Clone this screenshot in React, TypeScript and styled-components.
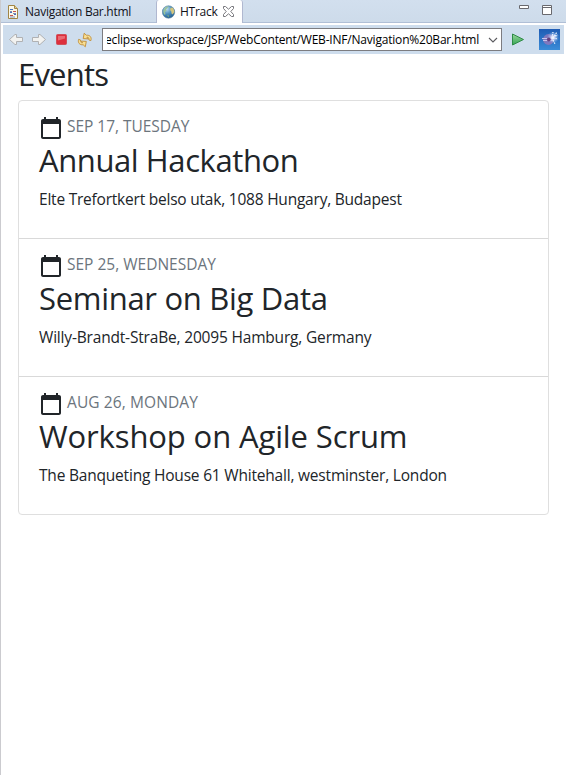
import React from "react";
import styled, { createGlobalStyle } from "styled-components";

const Global = createGlobalStyle`
  * { box-sizing: border-box; }
  body { margin: 0; background: #fff; color: #212529; font-family: "Open Sans", sans-serif; }
  svg { display: block; flex: none; }
`;

const Window = styled.div`
  width: 566px;
  height: 775px;
  border-left: 1px solid #cbcbcf;
  background: #fff;
  overflow: hidden;
`;

const TabBar = styled.header`
  display: flex;
  height: 23px;
  background: linear-gradient(#d2dfee, #cddbea);
  box-shadow: inset 0 -1px #b0bfd6;
`;

const Tab = styled.div<{ $active?: boolean }>`
  display: flex;
  align-items: center;
  width: ${(p) => (p.$active ? "87px" : "155px")};
  height: 23px;
  padding-left: 5px;
  color: #101018;
  background: ${(p) => (p.$active ? "#fff" : "transparent")};
  border: solid #b0b8d0;
  border-width: ${(p) => (p.$active ? "0 1px" : "0")};
  border-radius: 3px 3px 0 0;
`;

const TabLabel = styled.span<{ $gap: number; $width: number }>`
  width: ${(p) => p.$width}px;
  margin-left: ${(p) => p.$gap}px;
  font-size: 12px;
  line-height: 22px;
  letter-spacing: -0.27px;
  white-space: nowrap;
`;

const WindowButtons = styled.div`
  display: flex;
  gap: 13px;
  margin: 5px 14px 0 auto;
`;

const Toolbar = styled.nav`
  display: flex;
  align-items: center;
  height: 29px;
  margin: 2px 2px 0;
  padding: 0 4px 0 5px;
  background: #cedded;
`;

const ToolIcons = styled.div`
  display: flex;
  align-items: center;
  gap: 7px;
  width: 94px;
`;

const Address = styled.div`
  display: flex;
  align-items: center;
  width: 400px;
  height: 23px;
  padding: 0 4px;
  background: #fff;
  border: 1px solid #7c7c80;
`;

const Url = styled.div`
  display: flex;
  flex: none;
  justify-content: flex-end;
  width: 372px;
  overflow: hidden;
  color: #000;
  font-size: 12px;
  line-height: 20px;
  letter-spacing: -0.2px;
  white-space: nowrap;
`;

const DropArrow = styled.div`
  margin-left: 9px;
`;

const Launch = styled.div`
  display: flex;
  flex: 1;
  align-items: center;
  justify-content: space-between;
  padding-left: 10px;
`;

const Page = styled.main`
  padding: 0 17px;
`;

const Heading = styled.h2<{ $spacing: number }>`
  margin: 0;
  font-size: 31px;
  font-weight: 400;
  line-height: 40px;
  letter-spacing: ${(p) => p.$spacing}px;
  white-space: nowrap;
`;

const EventList = styled.ul`
  width: 531px;
  margin: 6px 0 0;
  padding: 0;
  list-style: none;
  border: 1px solid #dfdfdf;
  border-radius: 4px;
`;

const EventItem = styled.li`
  height: 138px;
  padding: 13px 20px 0;
  & + & { border-top: 1px solid #d9d9d9; }
  &:first-child { height: 137px; }
`;

const DateRow = styled.div`
  display: flex;
  align-items: flex-end;
  height: 26px;
`;

const DateText = styled.span<{ $spacing: number }>`
  align-self: flex-start;
  margin-left: 4px;
  color: #6c757d;
  font-size: 15.5px;
  line-height: 25px;
  letter-spacing: ${(p) => p.$spacing}px;
`;

const Venue = styled.p<{ $spacing: number }>`
  margin: 7px 0 0;
  font-size: 15.5px;
  line-height: 25px;
  letter-spacing: ${(p) => p.$spacing}px;
  white-space: nowrap;
`;

const FileIcon = () => (
  <svg width="14" height="16" viewBox="0 0 14 16">
    <path d="M2.5 1.5h6l3 3v10h-9z" fill="#fbf8e8" stroke="#a18546" />
    <path d="M8.5 1.5v3h3" fill="#e4cf94" stroke="#a18546" />
    <path d="M4 5.5h3M4 8.5h2M8 10.5h2" stroke="#4b6fbe" />
    <path d="M7 7.5h3M4 11.5h3" stroke="#c7524b" />
    <path d="M4 7.5h2M7 9.5h3M4 13h5" stroke="#7b8eb4" />
  </svg>
);

const GlobeIcon = () => (
  <svg width="14" height="14" viewBox="0 0 14 14">
    <defs>
      <radialGradient id="sea" cx=".35" cy=".25" r=".8">
        <stop offset="0" stopColor="#c3dff0" />
        <stop offset=".5" stopColor="#4e91bd" />
        <stop offset="1" stopColor="#235b8d" />
      </radialGradient>
    </defs>
    <circle cx="6.5" cy="7" r="6.2" fill="url(#sea)" stroke="#56839f" strokeWidth=".6" />
    <path d="M1.7 5C3 2.5 4.5 1.4 6.5 1.6L5.5 3 4 4.5 4.5 6 2.8 7 3.5 9 2.8 10C1.7 9 1 7 1.7 5z" fill="#9cc49a" />
    <path d="M8.5 3l1.8-.5c1.3 1 2.1 2.7 2 4.5l-1.6 2.6-1.2-1-.2-2L8.1 5z" fill="#d3c57e" />
    <path d="M5 10l2 .5-.5 2z" fill="#7fae76" />
  </svg>
);

const CloseIcon = () => (
  <svg width="11" height="11" viewBox="0 0 11 11">
    <path
      d="M.5.5h2l3 2.7 3-2.7h2v2L7.8 5.5l2.7 3v2h-2l-3-2.7-3 2.7h-2v-2l2.7-3-2.7-3z"
      fill="#fff"
      stroke="#77777c"
    />
  </svg>
);

const MinimizeIcon = () => (
  <svg width="10" height="4" viewBox="0 0 10 4">
    <path d="M.5.5h9v3h-9z" fill="#fff" stroke="#69696e" />
  </svg>
);

const MaximizeIcon = () => (
  <svg width="10" height="10" viewBox="0 0 10 10">
    <path d="M.5.5h9v9h-9z" fill="#fff" stroke="#69696e" />
    <path d="M1 2.5h8" stroke="#69696e" />
  </svg>
);

const ArrowIcon = ({ forward }: { forward?: boolean }) => (
  <svg width="16" height="13" viewBox="0 0 16 13">
    <path
      d={
        forward
          ? "M1.5 4.5h6v-3h1.5l5.5 5-5.5 5H7.5v-3h-6z"
          : "M14.5 4.5h-6v-3H7l-5.5 5 5.5 5h1.5v-3h6z"
      }
      fill="#f2f2f0"
      stroke="#b0b1b3"
      strokeLinejoin="round"
    />
  </svg>
);

const StopIcon = () => (
  <svg width="16" height="13" viewBox="0 0 16 13">
    <rect x="2.5" y="1.5" width="10" height="10" rx="1" fill="#dd2f3d" stroke="#d0505a" />
    <path d="M4 3h7v2.5l-7 2z" fill="#ea6a72" />
  </svg>
);

const RefreshIcon = () => (
  <svg width="16" height="16" viewBox="0 0 16 16">
    <g fill="#f9df93" stroke="#c08c35" strokeWidth=".9" strokeLinejoin="round">
      <path d="M7.2 1.2L6.2 6.6l5 .3-1.3-1.7c1.4-.2 2.2.6 2 2.8l2 .6c.9-3.4-.9-5.7-4.6-5.4z" />
      <path d="M8.3 14.8l1-5.4-5-.3 1.3 1.7c-1.4.2-2.2-.6-2-2.8l-2-.6c-.9 3.4.9 5.7 4.6 5.4z" />
    </g>
  </svg>
);

const ChevronIcon = () => (
  <svg width="10" height="6" viewBox="0 0 10 6">
    <path d="M1 1l4 4 4-4" fill="none" stroke="#5c5c60" strokeWidth="1.1" />
  </svg>
);

const PlayIcon = () => (
  <svg width="13" height="13" viewBox="0 0 13 13">
    <defs>
      <linearGradient id="go" x2="0" y2="1">
        <stop stopColor="#9bd59d" />
        <stop offset="1" stopColor="#32a552" />
      </linearGradient>
    </defs>
    <path d="M.5 1v11l11-5.5z" fill="url(#go)" stroke="#2f8b47" strokeLinejoin="round" />
  </svg>
);

const BrowserIcon = () => (
  <svg width="21" height="21" viewBox="0 0 21 21">
    <defs>
      <linearGradient id="sky" x2="0" y2="1">
        <stop stopColor="#1f5cb4" />
        <stop offset="1" stopColor="#3a8cd8" />
      </linearGradient>
      <radialGradient id="glow">
        <stop stopColor="#fff" />
        <stop offset=".35" stopColor="#d5daf8" stopOpacity=".8" />
        <stop offset="1" stopColor="#86b5ee" stopOpacity="0" />
      </radialGradient>
    </defs>
    <path d="M0 0h21v21H0z" fill="url(#sky)" />
    <circle cx="9.5" cy="10.5" r="5.4" fill="#8878bd" opacity=".9" />
    <path d="M3 9.5h12M4 11.5h11" stroke="#c9c2ea" strokeWidth="1" />
    <circle cx="14" cy="8.5" r="6" fill="url(#glow)" />
    <path d="M14 9l4-6M14 9l5 1M13 9l3 6M13 9l1-6M14 8l5-2" stroke="#eef4ff" strokeWidth="1.2" strokeDasharray="1.5 1" />
    <circle cx="9.8" cy="10.5" r="1.9" fill="#64407f" />
  </svg>
);

const CalendarIcon = () => (
  <svg width="24" height="24" viewBox="0 0 24 24" fill="#212529">
    <path d="M20 3h-1V1h-2v2H7V1H5v2H4c-1.1 0-2 .9-2 2v16c0 1.1.9 2 2 2h16c1.1 0 2-.9 2-2V5c0-1.1-.9-2-2-2zm0 18H4V8h16v13z" />
  </svg>
);

const events = [
  {
    date: "SEP 17, TUESDAY", dateSpacing: -0.03,
    title: "Annual Hackathon", titleSpacing: -0.41,
    venue: "Elte Trefortkert belso utak, 1088 Hungary, Budapest", venueSpacing: -0.22,
  },
  {
    date: "SEP 25, WEDNESDAY", dateSpacing: 0,
    title: "Seminar on Big Data", titleSpacing: -0.3,
    venue: "Willy-Brandt-StraBe, 20095 Hamburg, Germany", venueSpacing: -0.18,
  },
  {
    date: "AUG 26, MONDAY", dateSpacing: 0.1,
    title: "Workshop on Agile Scrum", titleSpacing: -0.12,
    venue: "The Banqueting House 61 Whitehall, westminster, London", venueSpacing: -0.2,
  },
];

export default function App() {
  return (
    <Window>
      <Global />
      <TabBar>
        <Tab>
          <FileIcon />
          <TabLabel $gap={5} $width={110}>Navigation Bar.html</TabLabel>
        </Tab>
        <Tab $active>
          <GlobeIcon />
          <TabLabel $gap={4} $width={43}>HTrack</TabLabel>
          <CloseIcon />
        </Tab>
        <WindowButtons>
          <MinimizeIcon />
          <MaximizeIcon />
        </WindowButtons>
      </TabBar>
      <Toolbar>
        <ToolIcons>
          <ArrowIcon />
          <ArrowIcon forward />
          <StopIcon />
          <RefreshIcon />
        </ToolIcons>
        <Address>
          <Url>eclipse-workspace/JSP/WebContent/WEB-INF/Navigation%20Bar.html</Url>
          <DropArrow>
            <ChevronIcon />
          </DropArrow>
        </Address>
        <Launch>
          <PlayIcon />
          <BrowserIcon />
        </Launch>
      </Toolbar>
      <Page>
        <Heading $spacing={-0.8}>Events</Heading>
        <EventList>
          {events.map((e) => (
            <EventItem key={e.title}>
              <DateRow>
                <CalendarIcon />
                <DateText $spacing={e.dateSpacing}>{e.date}</DateText>
              </DateRow>
              <Heading $spacing={e.titleSpacing}>{e.title}</Heading>
              <Venue $spacing={e.venueSpacing}>{e.venue}</Venue>
            </EventItem>
          ))}
        </EventList>
      </Page>
    </Window>
  );
}
